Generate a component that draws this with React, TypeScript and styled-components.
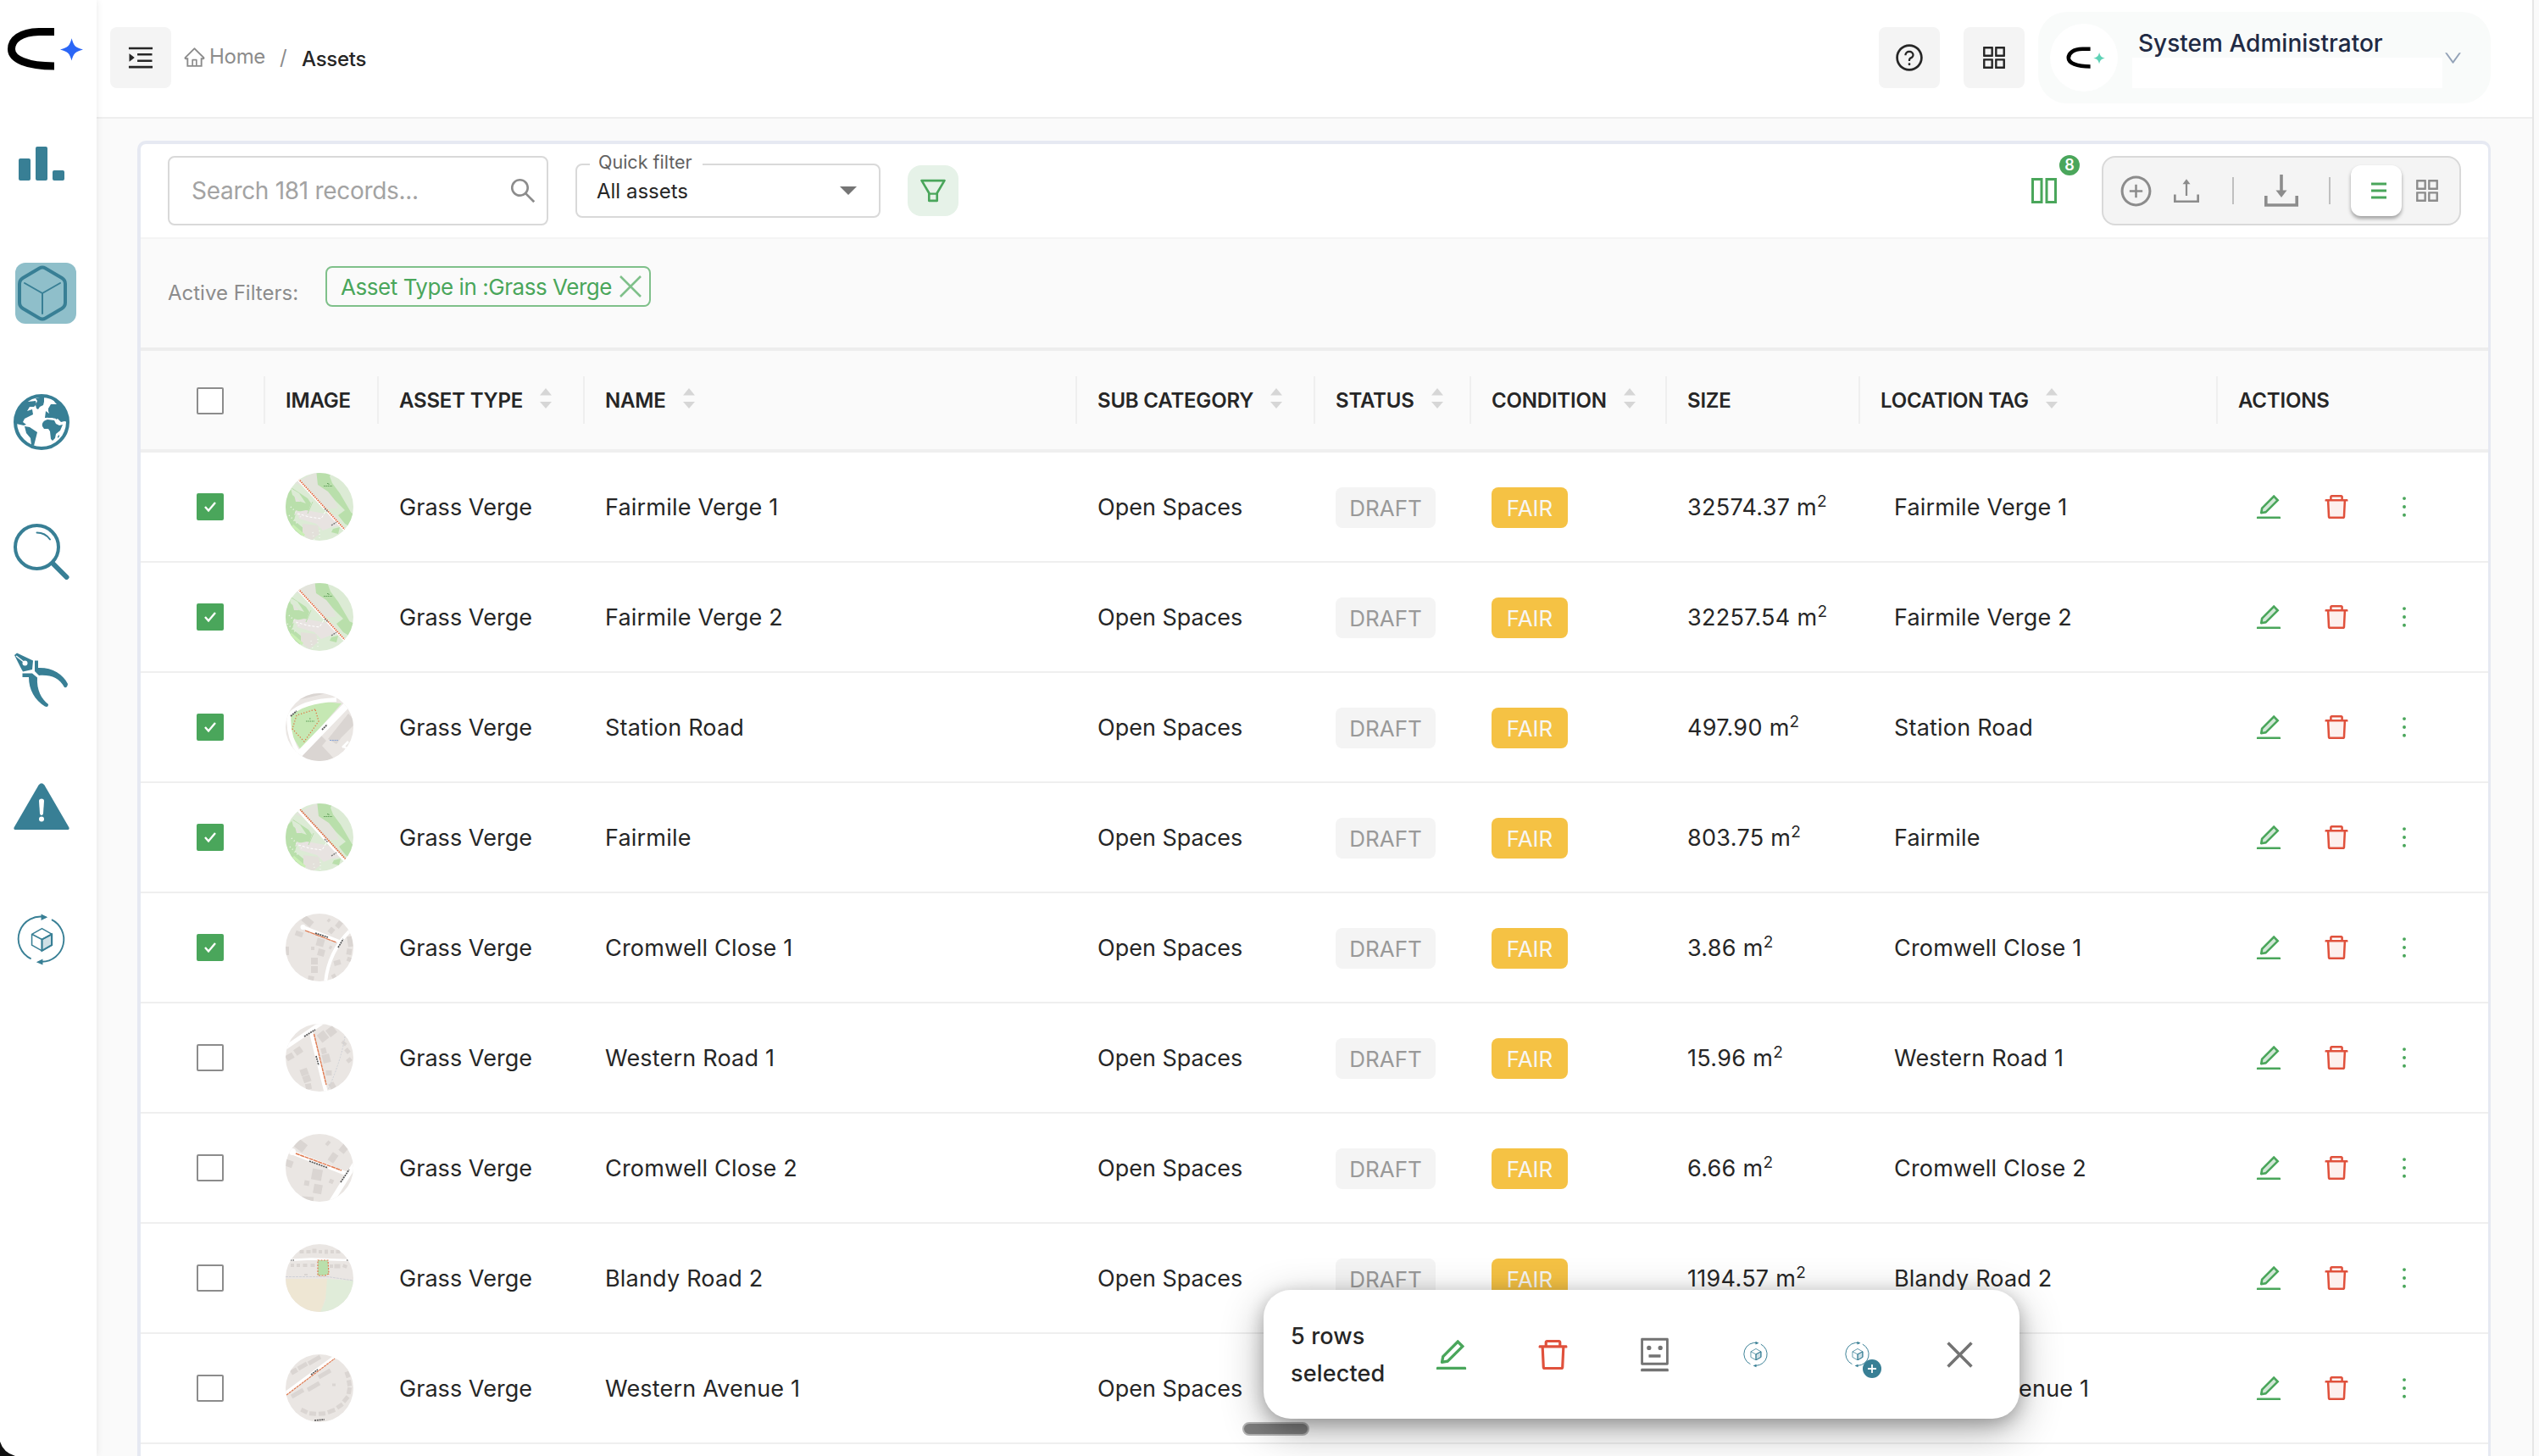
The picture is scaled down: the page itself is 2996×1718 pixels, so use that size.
import type { ReactNode } from 'react'
import styled, { createGlobalStyle } from 'styled-components'
import {
  AiOutlineAppstore,
  AiOutlineClose,
  AiOutlineDelete,
  AiOutlineDown,
  AiOutlineEdit,
  AiOutlineFilter,
  AiOutlineHome,
  AiOutlineMenuUnfold,
  AiOutlineMore,
  AiOutlinePlusCircle,
  AiOutlineQuestionCircle,
  AiOutlineRobot,
  AiOutlineSearch,
  AiTwotoneDelete,
  AiTwotoneEdit,
} from 'react-icons/ai'

const TEAL = '#387f95'
const GREEN = '#4aa65b'
const RED = '#e0513c'
const COLUMNS = '147px 134px 243px 581px 281px 184px 231px 228px 422px 319px'

const GlobalStyle = createGlobalStyle`
  * {
    box-sizing: border-box;
  }

  body {
    margin: 0;
    overflow: hidden;
    background-color: #fafafa;
    color: #262626;
    font-family: Inter, 'Liberation Sans', sans-serif;
  }

  svg {
    display: block;
    flex-shrink: 0;
  }
`

const Layout = styled.div`
  position: relative;
  display: flex;
  width: 2996px;
  height: 1718px;
  overflow: hidden;
`

const Sidebar = styled.aside`
  z-index: 1;
  flex: none;
  width: 114px;
  background-color: #fff;
  box-shadow: 0 0 8px rgba(0, 0, 0, 0.09);
`

const LogoBox = styled.div`
  height: 117px;
  padding: 32px 0 0 8px;
`

const NavItem = styled.div`
  display: flex;
  align-items: center;
  justify-content: center;
  width: 98px;
  height: 152.5px;
`

const NavActive = styled.div`
  display: flex;
  align-items: center;
  width: 72px;
  height: 72px;
  margin-left: 10px;
  padding-left: 3px;
  border-radius: 12px;
  background-color: #8fbfca;
`

const Main = styled.main`
  flex: none;
  width: 2876px;
  border-right: 2px solid #e6e6e6;
`

const Header = styled.header`
  display: flex;
  align-items: center;
  height: 140px;
  padding: 0 49px 2px 16px;
  border-bottom: 2px solid #eeeeee;
  background-color: #fff;
`

const SquareButton = styled.div<{ $gap?: number }>`
  display: flex;
  align-items: center;
  justify-content: center;
  width: 72px;
  height: 72px;
  margin-right: ${({ $gap }) => $gap ?? 0}px;
  border-radius: 8px;
  background-color: #f4f4f4;
`

const Crumbs = styled.div`
  display: flex;
  align-items: center;
  margin-right: auto;
  color: #8c8c8c;
  font-size: 24px;
  line-height: 30px;

  svg {
    margin: -2px 0 0 -2px;
  }

  span {
    margin: 0 17px 2px 4px;
    letter-spacing: -0.3px;
  }

  i {
    width: 8px;
    margin-right: 18px;
    font-style: normal;
  }

  strong {
    margin-top: 4px;
    color: #262626;
    font-weight: 500;
    letter-spacing: -0.3px;
  }
`

const Profile = styled.div`
  display: flex;
  align-items: center;
  width: 534px;
  height: 108px;
  padding: 0 32px 0 14px;
  border-radius: 34px;
  background-color: #f9fbfa;
  color: #94a3b8;
`

const Avatar = styled.div`
  display: flex;
  align-items: center;
  justify-content: center;
  width: 80px;
  height: 80px;
  margin-right: 17px;
  padding-left: 5px;
  border-radius: 50%;
  background-color: #fff;
`

const ProfileText = styled.div`
  width: 366px;
  height: 74px;

  p {
    height: 37px;
    margin: 0 0 0 7px;
    color: #1f2a44;
    font-size: 28px;
    font-weight: 500;
    line-height: 40px;
    letter-spacing: 0.02px;
  }

  div {
    height: 36px;
    background-color: #fff;
  }
`

const Card = styled.section`
  width: 2777px;
  height: 1600px;
  margin: 26px 0 0 48px;
  border: 4px solid #e6e9f2;
  border-right-width: 3px;
  border-radius: 10px 10px 0 0;
  background-color: #fff;
  overflow: hidden;
`

const Toolbar = styled.div`
  display: flex;
  align-items: center;
  height: 112px;
  padding: 0 32px;
  border-bottom: 2px solid #f4f4f4;
`

const SearchBox = styled.div`
  display: flex;
  align-items: center;
  justify-content: space-between;
  width: 449px;
  height: 82px;
  padding: 0 10px 0 26px;
  border: 2px solid #d9d9d9;
  border-radius: 8px;
  color: #a3a3a3;
  font-size: 28px;
  line-height: 34px;
  letter-spacing: -0.3px;

  svg {
    color: #8c8c8c;
  }
`

const QuickFilter = styled.div`
  position: relative;
  display: flex;
  align-items: center;
  justify-content: space-between;
  width: 360px;
  height: 64px;
  margin: 0 32px;
  padding: 0 26px 0 23px;
  border: 2px solid #d9d9d9;
  border-radius: 8px;
  font-size: 24px;
`

const FilterLabel = styled.label`
  position: absolute;
  top: -17px;
  left: 15px;
  width: 133px;
  padding-left: 10px;
  background-color: #fff;
  color: #616161;
  font-size: 21.5px;
  line-height: 26px;
  white-space: nowrap;
`

const FilterButton = styled.div`
  display: flex;
  align-items: center;
  justify-content: center;
  width: 60px;
  height: 60px;
  border-radius: 16px;
  background-color: #e6f2e8;
  color: ${GREEN};
`

const ColumnsButton = styled.div`
  position: relative;
  width: 30px;
  margin: 0 53px 0 auto;
`

const Badge = styled.span`
  position: absolute;
  top: -27px;
  left: 33px;
  width: 24px;
  height: 24px;
  border-radius: 50%;
  background-color: ${GREEN};
  color: #fff;
  font-size: 18px;
  font-weight: 600;
  line-height: 24px;
  text-align: center;
`

const ToolGroup = styled.div`
  display: flex;
  align-items: center;
  width: 424px;
  height: 82px;
  padding-left: 18px;
  border: 2px solid #d9d9d9;
  border-radius: 16px;
  background-color: #f4f4f4;
  color: #8c8c8c;
`

const ToolDivider = styled.span<{ $before: number; $after: number }>`
  width: 2px;
  height: 32px;
  margin-right: ${({ $after }) => $after}px;
  margin-left: ${({ $before }) => $before}px;
  background-color: #bfbfbf;
`

const ViewToggle = styled.div`
  display: flex;
  align-items: center;
  width: 60px;
  height: 60px;
  margin-right: 12px;
  padding-left: 24px;
  border-radius: 12px;
  background-color: #fff;
  box-shadow: 0 3px 4px rgba(0, 0, 0, 0.35);
`

const ActiveFilters = styled.div`
  display: flex;
  align-items: flex-start;
  height: 132px;
  padding: 32px 32px 0;
  border-bottom: 4px solid #ededed;
  background-color: #fafafa;
  color: #8c8c8c;
  font-size: 24px;

  > span {
    width: 186px;
    padding-top: 17px;
    line-height: 30px;
  }
`

const Chip = styled.div`
  display: flex;
  align-items: center;
  justify-content: space-between;
  width: 384px;
  height: 48px;
  padding: 0 8px 0 16px;
  border: 2px solid #7fc08a;
  border-radius: 8px;
  color: ${GREEN};
  font-size: 26px;
  letter-spacing: -0.45px;
  white-space: nowrap;

  svg {
    color: #7fc08a;
  }
`

const HeadRow = styled.div`
  display: grid;
  grid-template-columns: ${COLUMNS};
  align-items: center;
  height: 120px;
  padding-bottom: 1px;
  border-bottom: 4px solid #efefef;
  background-color: #fafafa;
`

const HeadCell = styled.div`
  display: flex;
  align-items: center;
  height: 56px;
  padding: 2px 0 0 24px;
  border-right: 2px solid #efefef;
  font-size: 24px;
  font-weight: 600;
  letter-spacing: -0.2px;
  white-space: nowrap;

  &:first-child {
    padding-left: 66px;
  }

  &:last-child {
    border-right: none;
  }

  svg {
    margin: 0 0 5px 20px;
  }
`

const Row = styled.div`
  display: grid;
  grid-template-columns: ${COLUMNS};
  align-items: center;
  height: 130px;
  border-bottom: 2px solid #efefef;
`

const Cell = styled.div<{ $indent?: number }>`
  display: flex;
  align-items: center;
  padding-left: ${({ $indent }) => $indent ?? 24}px;
`

const Text = styled.span<{ $spacing?: number }>`
  padding-top: 2px;
  font-size: 27px;
  line-height: 34px;
  letter-spacing: ${({ $spacing }) => $spacing ?? 0}px;
  white-space: pre;

  sup {
    font-size: 19px;
    line-height: 0;
    vertical-align: 10px;
  }
`

const Checkbox = styled.span<{ $checked?: boolean }>`
  display: flex;
  align-items: center;
  justify-content: center;
  width: 32px;
  height: 32px;
  border: 2px solid ${({ $checked }) => ($checked ? GREEN : '#8c8c8c')};
  border-radius: 2px;
  background-color: ${({ $checked }) => ($checked ? GREEN : '#fff')};
`

const Tag = styled.span<{ $kind: 'status' | 'condition' }>`
  display: flex;
  align-items: center;
  justify-content: center;
  width: ${({ $kind }) => ($kind === 'status' ? 118 : 90)}px;
  height: 48px;
  margin-top: 2px;
  border-radius: 8px;
  background-color: ${({ $kind }) => ($kind === 'status' ? '#f4f4f4' : '#f5c244')};
  color: ${({ $kind }) => ($kind === 'status' ? '#999999' : '#f6f6f6')};
  font-size: 26px;
`

const TwoTone = styled.span<{ $color: string; $tint: string; $gap: number }>`
  margin-right: ${({ $gap }) => $gap}px;
  color: ${({ $color }) => $color};

  path[fill] {
    fill: ${({ $tint }) => $tint};
  }
`

const BulkBar = styled.div`
  position: absolute;
  top: 1522px;
  left: 1491px;
  z-index: 2;
  display: flex;
  align-items: center;
  width: 892px;
  height: 152px;
  padding-left: 32px;
  border-radius: 32px;
  background-color: #fff;
  box-shadow: 0 14px 50px rgba(0, 0, 0, 0.3), 0 6px 20px rgba(0, 0, 0, 0.24);

  p {
    flex: none;
    width: 167px;
    margin: 2px 0 0;
    font-size: 27px;
    font-weight: 500;
    line-height: 44px;
    letter-spacing: 0.15px;
  }
`

const BulkAction = styled.span<{ $color?: string }>`
  position: relative;
  display: flex;
  flex: none;
  align-items: center;
  justify-content: center;
  width: 44px;
  height: 44px;
  margin-right: 76px;
  color: ${({ $color }) => $color ?? '#737373'};
`

const PlusBadge = styled.span`
  position: absolute;
  top: 28px;
  left: 28px;
`

const ScrollThumb = styled.span`
  position: absolute;
  top: 1678px;
  left: 1466px;
  z-index: 1;
  width: 79px;
  height: 16px;
  border: 2px solid #b4b4b4;
  border-radius: 8px;
  background-color: #7d7d7d;
`

const WindowCorner = styled.svg`
  position: absolute;
  bottom: 0;
  left: 0;
  z-index: 3;
`

function Logo({ width, star }: { width: number; star: string }) {
  return (
    <svg width={width} height={(width * 52) / 92} viewBox="0 0 92 52">
      <path d="M56 5.5H38C16 6 5.500 15 5.500 26C5.500 38 24 46 56 46" fill="none" stroke="#000" strokeWidth="9" />
      <path d="M76.500 13c2.500 9 4 11 13.500 13.500c-9.500 2.500-11 4.500-13.500 13c-2.500-8.500-4-10.500-13.500-13c9.500-2.500 11-4.500 13.500-13z" fill={star} />
    </svg>
  )
}

function BarsIcon() {
  return (
    <svg width="66" height="66" viewBox="0 0 66 66" fill={TEAL}>
      <rect x="6" y="27" width="14" height="26" rx="2" />
      <rect x="26" y="13" width="14" height="40" rx="2" />
      <rect x="46" y="41" width="14" height="12" rx="2" />
    </svg>
  )
}

function CubeIcon() {
  return (
    <svg width="58" height="66" viewBox="0 0 58 66" fill="none" stroke={TEAL} strokeLinecap="round">
      <path
        d="M25.500 3.500Q29 1.500 32.500 3.500L52 15Q56 17.500 56 22V44Q56 48.500 52 51L32.500 62.500Q29 64.500 25.500 62.500L6 51Q2 48.500 2 44V22Q2 17.500 6 15Z"
        strokeWidth="4"
      />
      <path d="M29 33V57M29 33L8 21M29 33L50 21" strokeWidth="2" />
    </svg>
  )
}

function GlobeIcon() {
  return (
    <svg width="66" height="66" viewBox="0 0 66 66" fill={TEAL}>
      <circle cx="33" cy="33" r="31" fill="#fff" stroke={TEAL} strokeWidth="4" />
      <path d="M2 34C2 20 9 11 19 5L17 9L26 8L27 12L24 15L19 15L16 20L22 18L23 24L17 27L13 29L11 33L15 36L12 37L3 35Z" />
      <path d="M26 5L28 8L26 13L27 17L29 18L31 15L35 13L36 9L36 3Z" />
      <path d="M45 4L49 10L51 12L44 12L41 17L41 20L42 23L38 20L37 28L45 28L50 30L52 29L56 33L60 32L64 33C63 18 57 10 47 4Z" />
      <path d="M13 38L19 39L28 45L26 53L24 61L21 60L20 52L15 46Z" />
      <path d="M34 38C33 34 36 31 40 30L48 31L50 35L54 37L58 36L55 43L50 47L49 52L46 55L44 53L43 44L41 41L36 41Z" />
      <path d="M39 28.500L49 29.500L51 33" fill="none" stroke="#fff" strokeWidth="1.500" />
      <path d="M52 50L54 48L54 50L52 52Z" />
    </svg>
  )
}

function MagnifierIcon() {
  return (
    <svg width="66" height="66" viewBox="0 0 66 66" fill="none" stroke={TEAL} strokeLinecap="round">
      <circle cx="27.500" cy="27.500" r="25.500" strokeWidth="4" />
      <path d="M27.500 10.500C34 10.500 39.500 13.500 43 18.500" strokeWidth="2" />
      <path d="M46.500 47L62.500 63" strokeWidth="6" />
    </svg>
  )
}

function PliersIcon() {
  return (
    <svg width="66" height="66" viewBox="0 0 66 66" fill={TEAL}>
      <path d="M1 3L4 0.500L23 9.500L22 20L11 22.500L8 17Z" />
      <path d="M3 4L12 11" stroke="#fff" strokeWidth="1.500" />
      <circle cx="13.500" cy="12.500" r="3" fill="#fff" />
      <path d="M25 9.500H29V18C46 17.500 58 25 64 37Q63.500 42 60 41C54 30 44 26 30 27L25 22Z" />
      <path d="M10.500 24.500H22L28 29.500C27 44 33 55 41 61Q41 65 37 63.500C25 56 18 44 18 29H10.500Z" />
    </svg>
  )
}

function WarningIcon() {
  return (
    <svg width="66" height="66" viewBox="0 0 66 66">
      <path d="M29.500 3.500Q33 -1 36.500 3.500L65.500 53.500Q66 56 64 56H2Q0 56 0.500 53.500Z" fill={TEAL} />
      <path d="M30 22Q30 19.500 33 19.500Q36 19.500 36 22L35 37Q34.500 39 33 39Q31.500 39 31 37Z" fill="#fff" />
      <circle cx="33" cy="43.500" r="3" fill="#fff" />
    </svg>
  )
}

function CycleIcon({ size }: { size: number }) {
  return (
    <svg width={size} height={size} viewBox="0 0 66 66" fill="none" stroke={TEAL} strokeWidth="2">
      <path d="M38 5.500A27.500 27.500 0 0 0 19.500 57" />
      <path d="M45 8.500A27.500 27.500 0 0 1 33 60.500" />
      <path d="M32 1.500L40 5.500L32 9.500ZM34 57L26 61L34 64.500Z" fill={TEAL} stroke="none" />
      <path d="M33 33L45 26.500V40L33 47Z" fill="#cfe0e6" />
      <path d="M33 19.500L45.500 26.500V40L33 47L20.500 40V26.500ZM33 47V33L20.500 26.500M33 33L45.500 26.500" strokeWidth="1.600" strokeLinejoin="round" />
    </svg>
  )
}

function SortIcon() {
  return (
    <svg width="14" height="26" viewBox="0 0 14 26" fill="#d6d6d6">
      <path d="M7 1L14 9.500H0ZM7 25L0 17H14Z" />
    </svg>
  )
}

function TrayIcon({ size, down }: { size: number; down?: boolean }) {
  return (
    <svg width={size} height={size} viewBox="0 0 40 40" fill="none" stroke="currentColor" strokeWidth="3.600">
      <path d="M1.800 26V37H38.200V26" />
      {down ? <path d="M20 1V22" /> : <path d="M20 28V8" strokeWidth="3" />}
      <path d={down ? 'M13.500 19.500H26.500L20 28Z' : 'M14 9.500H26L20 1.500Z'} fill="currentColor" stroke="none" />
    </svg>
  )
}

// Shared block for the three Fairmile thumbnails, shifted a little per asset
function VergeMap({ shift, gap }: { shift: number; gap: number }) {
  return (
    <>
      <rect width="80" height="80" fill="#dcebd5" />
      <g transform={`translate(${-shift} ${-shift})`}>
        <path d="M10 12L38 -2L50 14L56 28L62 42L46 42L34 28L22 16Z" fill="#e3e4dc" />
        <path d="M36 -4H56L52 4L55 12L64 24L78 48L72 46L58 32L50 22L38 14Z" fill="#b9dfab" />
        <path d="M0 26L8 18L26 30L30 36L26 48L12 48L10 56L22 66L18 76L-4 60Z" fill="#b9dfab" />
        <path d="M6 18L16 24L24 36L18 34L8 26Z" fill="#dcebd5" />
        <path d="M10 26L18 34L12 34ZM12 44L18 46L10 50Z" fill="#e3e4dc" />
        <path d="M14 46L24 44L46 48L58 50L66 62L54 64L44 68L36 60L16 54Z" fill="#e8e3e1" />
        <path d="M20 60L38 62L40 72L30 80L20 72Z" fill="#e3e0da" />
        <path d="M62 50L70 44L84 50L80 66L70 60ZM56 66L64 64L62 72L54 70Z" fill="#b9dfab" />
        <path d="M26 48L32 34" stroke="#b9dfab" />
        <path d="M14 48L28 52L42 54L48 44" stroke="#fff" strokeDasharray="3 2" fill="none" />
        <path d="M8 62L22 74" stroke="#c9efb4" strokeWidth="3" />
        <path d="M6 40L20 54M4 50L14 60M32 70L34 80M40 68V80" stroke="#f1f6ee" strokeDasharray="1 3" strokeWidth="1.500" />
      </g>
      <path d="M13 6L72 70" stroke="#fff" strokeWidth="3" />
      <path d={`M${15 + gap} 7L${70 + gap} 67`} stroke="#e0693f" strokeWidth="1.800" strokeDasharray="1.600 1" />
      <path d="M46 42L50 46M54 62L60 58" stroke="#777" strokeWidth="1.400" strokeDasharray="2 1" />
      <path d="M45 15.500H55M49 12.500H51V14" stroke="#5c9c55" strokeDasharray="1.500 0.800" fill="none" />
    </>
  )
}

function Buildings({ items }: { items: number[][] }) {
  return (
    <>
      {items.map(([x, y, w, h, angle], i) => (
        <rect key={i} x={x - w / 2} y={y - h / 2} width={w} height={h} fill="#dad5d2" transform={`rotate(${angle} ${x} ${y})`} />
      ))}
    </>
  )
}

const maps: Record<string, ReactNode> = {
  verge1: <VergeMap shift={0} gap={0} />,
  verge2: <VergeMap shift={2} gap={0} />,
  fairmile: <VergeMap shift={-1} gap={2} />,
  station: (
    <>
      <rect width="80" height="80" fill="#eae6e3" />
      <path d="M14 8L24 0H48L40 2Z" fill="#dad5d2" />
      <path d="M16 78L42 50L48 56L43 62L56 76L44 82H20ZM50 54L74 24L84 34L66 52L60 60Z" fill="#dad5d2" />
      <path d="M18 67L5 46L4 28L12 19L34 9L66 12Z" fill="#c5e8b3" />
      <path d="M16 72Q2 50 4 26Q20 9 60 7.500" fill="none" stroke="#fff" strokeWidth="5" />
      <path d="M14 74L74 12" stroke="#fff" strokeWidth="8" />
      <path d="M35 19L13 26L8 42L22 57L39 33Z" fill="none" stroke="#e2703f" strokeDasharray="1.300 2" strokeWidth="1.200" />
      <path d="M6 27L13 21M43 43L49 37" stroke="#555" strokeWidth="1.800" strokeDasharray="2 0.800" />
      <path d="M24 33H34M28 30H30" stroke="#5c9c55" strokeDasharray="1.500 0.800" />
      <path d="M52 55.500H62" stroke="#86a3d8" strokeDasharray="2 0.800" />
      <path d="M67 64L74 57M68 62L73 66" stroke="#fff" strokeWidth="2.600" />
    </>
  ),
  cromwell1: (
    <>
      <rect width="80" height="80" fill="#eae6e3" />
      <Buildings
        items={[
          [26, 9, 13, 8, 40], [16, 24, 9, 6, 20], [54, 20, 7, 6, -50], [63, 13, 8, 6, -50], [51, 8, 4, 3, -50],
          [41, 34, 9, 9, 15], [42, 46, 8, 8, 15], [32, 41, 4, 4, 0], [34, 56, 8, 8, 0], [34, 66, 8, 8, 0],
          [61, 58, 8, 6, -15], [76, 33, 6, 12, -10], [75, 45, 6, 7, 10], [75, 54, 5, 5, 20], [53, 40, 3, 4, 30],
          [2, 44, 4, 10, 0], [30, 76, 7, 5, 10], [57, 74, 5, 5, -30],
        ]}
      />
      <path d="M21 16L66 34" stroke="#fff" strokeWidth="4" />
      <circle cx="20.500" cy="16" r="3" fill="#fff" />
      <path d="M76 20Q50 46 47 82" fill="none" stroke="#fff" strokeWidth="4" />
      <path d="M23 20L60 34" stroke="#e07a50" strokeWidth="1.200" strokeDasharray="6 0.500" />
      <path d="M35 23L50 28M62 40L68 30" stroke="#555" strokeWidth="1.700" strokeDasharray="2 0.800" />
    </>
  ),
  western1: (
    <>
      <rect width="80" height="80" fill="#eae6e3" />
      <Buildings
        items={[
          [44, 15, 10, 11, -38], [54, 9, 10, 10, -38], [15, 32, 9, 8, -35], [5, 39, 9, 7, -30], [45, 32, 6, 7, -15],
          [48, 41, 9, 10, -15], [51, 58, 7, 6, 0], [22, 57, 9, 8, -20], [25, 65, 9, 8, -20], [27, 74, 7, 7, -10],
          [73, 32, 5, 6, -40], [75, 43, 6, 5, -40], [69, 23, 6, 4, 40], [55, 73, 7, 7, -30],
        ]}
      />
      <path d="M0 28L44 -2" stroke="#fff" strokeWidth="5" />
      <path d="M30 10L48 82" stroke="#fff" strokeWidth="4.500" />
      <path d="M33.500 12L48 72" stroke="#e07a50" strokeWidth="1.400" strokeDasharray="4 0.600" />
      <path d="M70 15Q66 42 50 78" fill="none" stroke="#cdd0d6" strokeDasharray="2 1.500" />
      <path d="M22 15L35 7M36 38L39 49" stroke="#555" strokeWidth="1.700" strokeDasharray="2 0.800" />
    </>
  ),
  cromwell2: (
    <>
      <rect width="80" height="80" fill="#eae6e3" />
      <Buildings
        items={[
          [18, 14, 12, 11, 38], [50, 11, 6, 4, -50], [69, 17, 11, 8, -50], [56, 28, 11, 8, -55], [4, 35, 9, 8, 20],
          [37, 48, 12, 13, 10], [25, 58, 6, 6, 10], [38, 65, 10, 11, 10], [54, 56, 5, 5, 25], [26, 77, 14, 6, 5],
        ]}
      />
      <path d="M8 22L72 47" stroke="#fff" strokeWidth="5" />
      <circle cx="8" cy="21" r="4" fill="#fff" />
      <path d="M82 35L54 80" stroke="#fff" strokeWidth="6" />
      <path d="M12 23L66 43" stroke="#e07a50" strokeWidth="1.500" strokeDasharray="5 0.600" />
      <path d="M28 32L50 40M65 57L75 42" stroke="#555" strokeWidth="1.700" strokeDasharray="2 0.900" />
    </>
  ),
  blandy: (
    <>
      <rect width="80" height="80" fill="#eae6e3" />
      <path d="M0 41H50L48 60L42 80H0Z" fill="#eee6d3" />
      <path d="M49 41L80 43V80H41L47 66Z" fill="#e0ecd9" />
      <Buildings
        items={[
          [19, 9, 5, 4, 0], [27, 9, 5, 4, 0], [34, 8, 5, 5, 0], [41, 9, 4, 4, 0], [48, 9, 4, 5, 0], [55, 9, 4, 4, 0],
          [62, 9, 5, 4, 0], [8, 25, 4, 4, 0], [15, 25, 4, 4, 0], [23, 25, 5, 4, 0], [32, 25, 5, 4, 0], [54, 26, 4, 4, 0],
          [61, 26, 7, 5, 0], [70, 26, 5, 4, 20], [24, 36, 4, 2, 0],
        ]}
      />
      <path d="M4 19L30 17.500L76 19" fill="none" stroke="#fff" strokeWidth="2.500" />
      <path d="M0 38.500H50L80 43" fill="none" stroke="#c9cbd3" strokeWidth="0.800" strokeDasharray="3 1" />
      <path d="M38 19H50L51 35L47 37H38Z" fill="#b9dfab" stroke="#e07a50" strokeWidth="1.200" strokeDasharray="2 1.500" />
      <path d="M6 19H10M72 19H76" stroke="#777" strokeWidth="1.500" strokeDasharray="1.500 1" />
    </>
  ),
  avenue: (
    <>
      <rect width="80" height="80" fill="#eae6e3" />
      <Buildings
        items={[
          [34, 7, 16, 5, -30], [10, 20, 8, 6, -30], [20, 14, 12, 5, -30], [14, 46, 16, 5, -30], [33, 38, 16, 5, -30],
          [46, 23, 16, 5, -30], [22, 67, 8, 5, 25], [32, 70, 8, 5, 5], [43, 70, 8, 5, -5], [54, 67, 9, 5, -20],
          [64, 61, 8, 5, -35], [71, 53, 8, 5, -50], [75, 43, 8, 5, -80], [75, 34, 7, 5, 80], [73, 24, 7, 5, 70], [57, 36, 4, 3, 0],
        ]}
      />
      <path d="M0 46L58 3" stroke="#fff" strokeWidth="4" />
      <path d="M1 48L58 5" stroke="#e07a50" strokeWidth="1.200" strokeDasharray="3 0.700" />
      <path d="M30 24L38 18M34 78L46 77" stroke="#555" strokeWidth="1.600" strokeDasharray="2 0.800" />
    </>
  ),
}

const assets = [
  { name: 'Fairmile Verge 1', size: '32574.37', map: 'verge1', checked: true },
  { name: 'Fairmile Verge 2', size: '32257.54', map: 'verge2', checked: true },
  { name: 'Station Road', size: '497.90', map: 'station', checked: true },
  { name: 'Fairmile', size: '803.75', map: 'fairmile', checked: true },
  { name: 'Cromwell Close 1', size: '3.86', map: 'cromwell1', checked: true },
  { name: 'Western Road 1', size: '15.96', map: 'western1', checked: false },
  { name: 'Cromwell Close 2', size: '6.66', map: 'cromwell2', checked: false },
  { name: 'Blandy Road 2', size: '1194.57', map: 'blandy', checked: false },
  { name: 'Western Avenue 1', size: '20.15', map: 'avenue', checked: false },
]

const headings = [
  { title: 'IMAGE' },
  { title: 'ASSET TYPE', sort: true },
  { title: 'NAME', sort: true },
  { title: 'SUB CATEGORY', sort: true },
  { title: 'STATUS', sort: true },
  { title: 'CONDITION', sort: true },
  { title: 'SIZE' },
  { title: 'LOCATION TAG', sort: true },
  { title: 'ACTIONS' },
]

function Thumbnail({ map }: { map: string }) {
  return (
    <svg width="80" height="80" viewBox="0 0 80 80">
      <clipPath id={`clip-${map}`}>
        <circle cx="40" cy="40" r="40" />
      </clipPath>
      <g clipPath={`url(#clip-${map})`}>{maps[map]}</g>
    </svg>
  )
}

function AssetRow({ asset }: { asset: (typeof assets)[number] }) {
  return (
    <Row>
      <Cell $indent={66}>
        <Checkbox $checked={asset.checked}>
          {asset.checked && (
            <svg width="16" height="14" viewBox="0 0 16 14" fill="none" stroke="#fff" strokeWidth="2.400">
              <path d="M2 7L6 11.500L14 2" />
            </svg>
          )}
        </Checkbox>
      </Cell>
      <Cell>
        <Thumbnail map={asset.map} />
      </Cell>
      <Cell>
        <Text $spacing={0.05}>Grass Verge</Text>
      </Cell>
      <Cell>
        <Text $spacing={0.2}>{asset.name}</Text>
      </Cell>
      <Cell>
        <Text>Open Spaces</Text>
      </Cell>
      <Cell>
        <Tag $kind="status">DRAFT</Tag>
      </Cell>
      <Cell>
        <Tag $kind="condition">FAIR</Tag>
      </Cell>
      <Cell>
        <Text $spacing={0.3}>
          {asset.size} m<sup>2</sup>
        </Text>
      </Cell>
      <Cell $indent={40}>
        <Text $spacing={0.2}>{asset.name}</Text>
      </Cell>
      <Cell $indent={42}>
        <TwoTone $color={GREEN} $tint="#d3e8d7" $gap={44}>
          <AiTwotoneEdit size={36} />
        </TwoTone>
        <TwoTone $color={RED} $tint="#fdf0ee" $gap={44}>
          <AiTwotoneDelete size={36} />
        </TwoTone>
        <AiOutlineMore size={36} color={GREEN} />
      </Cell>
    </Row>
  )
}

function App() {
  return (
    <Layout>
      <GlobalStyle />
      <Sidebar>
        <LogoBox>
          <Logo width={92} star="#2b66f6" />
        </LogoBox>
        <NavItem>
          <BarsIcon />
        </NavItem>
        <NavItem>
          <NavActive>
            <CubeIcon />
          </NavActive>
        </NavItem>
        <NavItem>
          <GlobeIcon />
        </NavItem>
        <NavItem>
          <MagnifierIcon />
        </NavItem>
        <NavItem>
          <PliersIcon />
        </NavItem>
        <NavItem>
          <WarningIcon />
        </NavItem>
        <NavItem>
          <CycleIcon size={63} />
        </NavItem>
      </Sidebar>

      <Main>
        <Header>
          <SquareButton $gap={16}>
            <AiOutlineMenuUnfold size={36} />
          </SquareButton>
          <Crumbs>
            <AiOutlineHome size={27} />
            <span>Home</span>
            <i>/</i>
            <strong>Assets</strong>
          </Crumbs>
          <SquareButton $gap={28}>
            <AiOutlineQuestionCircle size={36} />
          </SquareButton>
          <SquareButton $gap={16}>
            <AiOutlineAppstore size={36} />
          </SquareButton>
          <Profile>
            <Avatar>
              <Logo width={47} star="#5ed2b6" />
            </Avatar>
            <ProfileText>
              <p>System Administrator</p>
              <div />
            </ProfileText>
            <AiOutlineDown size={25} />
          </Profile>
        </Header>

        <Card>
          <Toolbar>
            <SearchBox>
              Search 181 records...
              <AiOutlineSearch size={36} />
            </SearchBox>
            <QuickFilter>
              <FilterLabel>Quick filter</FilterLabel>
              All assets
              <svg width="20" height="10" viewBox="0 0 20 10" fill="#757575">
                <path d="M0 0H20L10 10Z" />
              </svg>
            </QuickFilter>
            <FilterButton>
              <AiOutlineFilter size={38} />
            </FilterButton>
            <ColumnsButton>
              <svg width="30" height="30" viewBox="0 0 30 30" fill="none" stroke={GREEN} strokeWidth="3">
                <path d="M1.500 1.500H12V28.500H1.500ZM18 1.500H28.500V28.500H18Z" />
              </svg>
              <Badge>8</Badge>
            </ColumnsButton>
            <ToolGroup>
              <AiOutlinePlusCircle size={41} />
              <svg width="24" height="1" />
              <TrayIcon size={30} />
              <ToolDivider $before={39} $after={36} />
              <TrayIcon size={40} down />
              <ToolDivider $before={36} $after={24} />
              <ViewToggle>
                <svg width="18" height="20" viewBox="0 0 18 20" stroke={GREEN} strokeWidth="3">
                  <path d="M0 2H18M0 10H18M0 18H18" />
                </svg>
              </ViewToggle>
              <AiOutlineAppstore size={36} />
            </ToolGroup>
          </Toolbar>

          <ActiveFilters>
            <span>Active Filters:</span>
            <Chip>
              Asset Type in :Grass Verge
              <svg width="28" height="28" viewBox="0 0 28 28" fill="none" stroke="currentColor" strokeWidth="2.500">
                <path d="M2 2L26 26M26 2L2 26" />
              </svg>
            </Chip>
          </ActiveFilters>

          <HeadRow>
            <HeadCell>
              <Checkbox />
            </HeadCell>
            {headings.map(({ title, sort }) => (
              <HeadCell key={title}>
                {title}
                {sort && <SortIcon />}
              </HeadCell>
            ))}
          </HeadRow>
          {assets.map((asset) => (
            <AssetRow key={asset.name} asset={asset} />
          ))}
        </Card>
      </Main>

      <ScrollThumb />
      <BulkBar>
        <p>
          5 rows
          <br />
          selected
        </p>
        <BulkAction $color={GREEN}>
          <AiOutlineEdit size={45} />
        </BulkAction>
        <BulkAction $color={RED}>
          <AiOutlineDelete size={45} />
        </BulkAction>
        <BulkAction>
          <AiOutlineRobot size={45} />
        </BulkAction>
        <BulkAction>
          <CycleIcon size={32} />
        </BulkAction>
        <BulkAction>
          <CycleIcon size={32} />
          <PlusBadge>
            <svg width="22" height="22" viewBox="0 0 22 22">
              <circle cx="11" cy="11" r="11" fill={TEAL} />
              <path d="M11 6V16M6 11H16" stroke="#fff" strokeWidth="1.800" />
            </svg>
          </PlusBadge>
        </BulkAction>
        <BulkAction>
          <AiOutlineClose size={45} />
        </BulkAction>
      </BulkBar>
      <WindowCorner width="20" height="18" viewBox="0 0 20 18">
        <path d="M0 1Q4 14 18 18H0Z" fill="#111" />
      </WindowCorner>
    </Layout>
  )
}

export default App
